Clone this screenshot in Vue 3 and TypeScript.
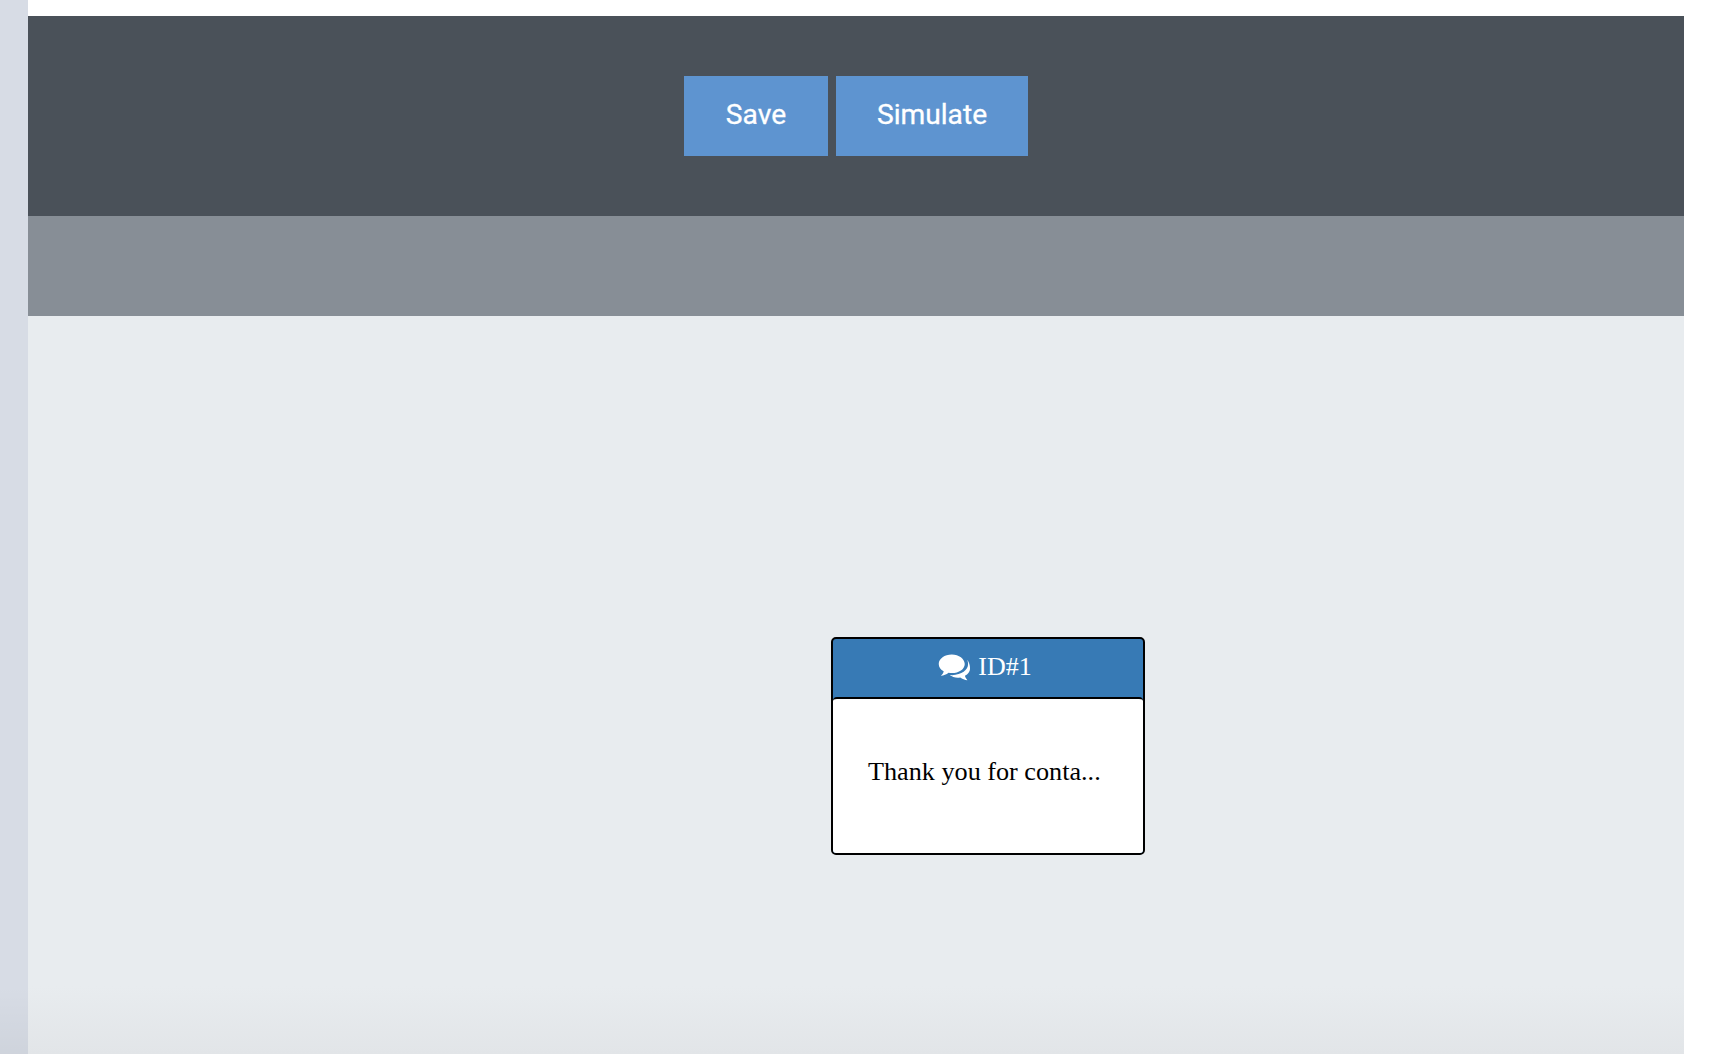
<script setup lang="ts">
const buttons: string[] = ['Save', 'Simulate']
</script>

<template>
  <div class="page">
    <aside class="rail"></aside>
    <main class="main">
      <header class="toolbar">
        <button v-for="b in buttons" :key="b" class="btn" type="button">{{ b }}</button>
      </header>
      <div class="subbar"></div>
      <section class="canvas">
        <article class="node">
          <div class="node-head">
            <svg class="icon" viewBox="0 0 30 25" aria-hidden="true">
              <path d="M12.500 .4C5.900 .4 .4 4.300 .4 9.200c0 2.800 1.800 5.200 4.600 6.800-.3 1.500-1.200 3-2.700 4.200 2.700-.2 5.200-1.200 7.200-2.800 1 .2 2 .3 3 .3 6.600 0 12-3.800 12-8.500S19.100 .4 12.500 .4z" fill="#fff"/>
              <path d="M26.600 5.400c.7 1.200 1 2.500 1 3.900 0 5.600-6 9.900-14.800 10.300-.8 0-1.500 0-2.200-.1 1.900 1.500 4.500 2.400 7.400 2.400.8 0 1.500-.1 2.300-.2 1.900 1.400 4.200 2.300 6.700 2.500-1.200-1.200-2-2.600-2.300-4 2.700-1.500 4.700-3.900 4.700-6.600 0-3.200-.9-6.300-2.800-8.200z" fill="#fff"/>
            </svg>
            <span>ID#1</span>
          </div>
          <div class="node-body">Thank you for conta...</div>
        </article>
      </section>
    </main>
    <div class="rail-fade"></div>
  </div>
</template>

<style>
html, body { margin: 0; padding: 0; background: #fff; }
</style>

<style scoped>
.page {
  position: relative;
  display: flex;
  width: 1714px;
  height: 1054px;
  overflow: hidden;
  background: #fff;
}
.rail {
  flex: 0 0 28px;
  background: #d7dce5;
}
.main {
  display: flex;
  flex-direction: column;
  width: 1656px;
  padding-top: 16px;
  box-sizing: border-box;
}
.toolbar {
  display: grid;
  grid-template-columns: 144px 192px;
  grid-template-rows: 80px;
  flex: 0 0 200px;
  gap: 8px;
  padding: 60px 0 0 656px;
  box-sizing: border-box;
  background: #4a5159;
}
.btn {
  padding: 0 0 4px;
  border: 0;
  background: #5e94d0;
  color: #fff;
  font-family: Roboto, sans-serif;
  font-size: 28.2px;
  font-weight: 400;
  -webkit-text-stroke: 0.3px #fff;
}
.subbar {
  flex: 0 0 100px;
  background: #878e96;
}
.canvas {
  position: relative;
  flex: 1;
  background: linear-gradient(to bottom, #e8ecef 0, #e8ecef 670px, #e2e5e8 738px);
}
.node {
  position: absolute;
  left: 803px;
  top: 321px;
  width: 314px;
  height: 218px;
  box-sizing: border-box;
  display: flex;
  flex-direction: column;
  border: 2px solid #000;
  border-radius: 5px;
  overflow: hidden;
  background: #377ab5;
  font-family: "Liberation Serif", serif;
}
.node-head {
  display: flex;
  align-items: center;
  justify-content: center;
  gap: 7px;
  flex: 0 0 58px;
  padding: 0 6px 2px 0;
  box-sizing: border-box;
  color: #fff;
  font-size: 26px;
}
.icon {
  width: 33px;
  height: 27px;
}
.node-body {
  flex: 1;
  padding: 58px 0 0 35px;
  border-top: 2px solid #000;
  border-radius: 4px 4px 0 0;
  background: #fff;
  color: #000;
  font-size: 26.2px;
  line-height: 30px;
}
.rail-fade {
  position: absolute;
  left: 0;
  bottom: 0;
  width: 28px;
  height: 68px;
  background: linear-gradient(to bottom, rgba(0, 0, 0, 0), rgba(0, 0, 0, 0.04));
}
</style>
